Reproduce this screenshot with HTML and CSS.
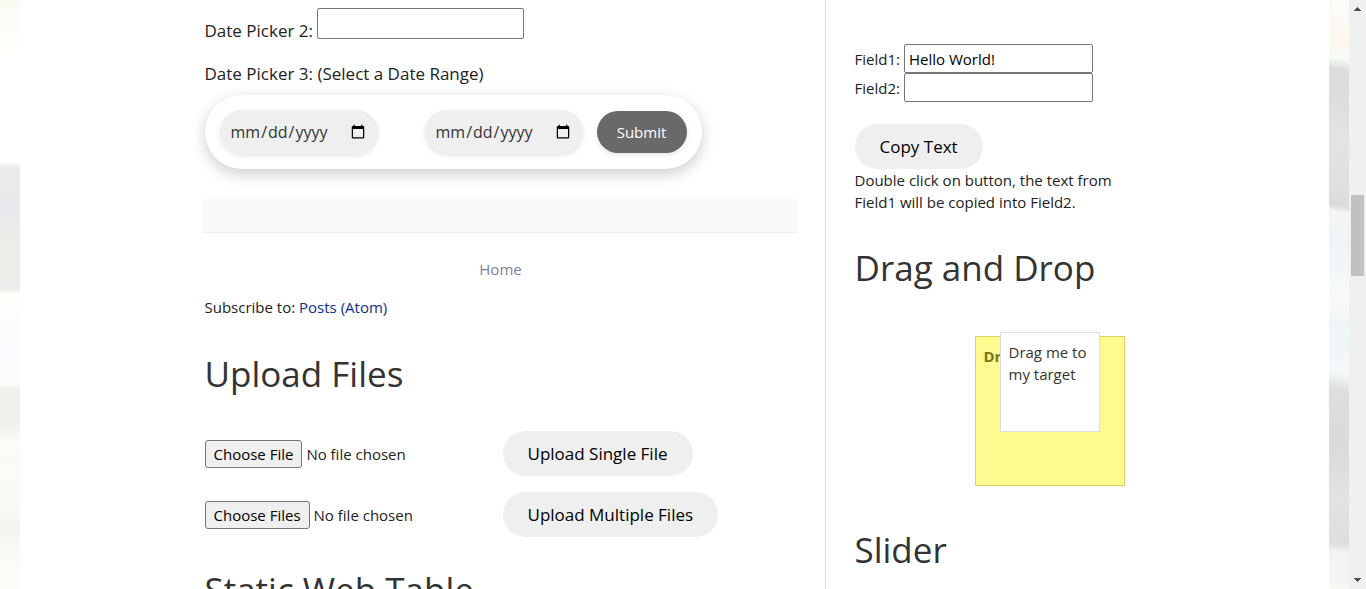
FILE: index.html
```html
<!DOCTYPE html>
<html lang="en">
<head>
<meta charset="utf-8">
<meta name="viewport" content="width=device-width, initial-scale=1">
<title>Automation Testing Practice</title>
<link rel="stylesheet" href="styles.css">
</head>
<body>
<div class="window">
  <div class="backdrop-left"></div>
  <div class="sheet">
    <div class="columns">
      <main class="main">
        <div class="picker">
          <label class="picker-label" for="picker2">Date Picker 2:</label>
          <input class="picker-input" id="picker2" type="text">
        </div>
        <p class="picker-title" id="range-title">Date Picker 3: (Select a Date Range)</p>
        <form class="range" aria-labelledby="range-title">
          <div class="range-dates">
            <input class="range-date" type="date" aria-label="Start date">
            <input class="range-date" type="date" aria-label="End date">
          </div>
          <button class="range-submit" type="button">Submit</button>
        </form>
        <div class="post-footer"></div>
        <nav class="pager"><a class="home-link" href="#home">Home</a></nav>
        <p class="feed">Subscribe to: <a class="feed-link" href="#atom">Posts (Atom)</a></p>
        <h2 class="title">Upload Files</h2>
        <form class="uploads">
          <input class="file" type="file" aria-label="Single file">
          <button class="pill" type="button">Upload Single File</button>
          <input class="file" type="file" multiple aria-label="Multiple files">
          <button class="pill" type="button">Upload Multiple Files</button>
        </form>
        <h2 class="title">Static Web Table</h2>
      </main>
      <aside class="side">
        <div class="field">
          <label for="field1">Field1:</label>
          <input class="field-input" id="field1" type="text" value="Hello World!">
        </div>
        <div class="field">
          <label for="field2">Field2:</label>
          <input class="field-input" id="field2" type="text">
        </div>
        <button class="pill copy" type="button">Copy Text</button>
        <p class="note">Double click on button, the text from Field1 will be copied into Field2.</p>
        <h2 class="title">Drag and Drop</h2>
        <div class="drop">
          <p class="drop-label">Drop here</p>
          <div class="drag">Drag me to my target</div>
        </div>
        <h2 class="title">Slider</h2>
      </aside>
    </div>
  </div>
  <div class="backdrop-right"></div>
  <div class="scrollbar">
    <svg class="arrow" viewBox="0 0 17 17" aria-hidden="true"><path d="M8 7h1v1h1v1h1v1h1v1H5v-1h1V9h1V8h1z"/></svg>
    <div class="thumb"></div>
    <svg class="arrow" viewBox="0 0 17 17" aria-hidden="true"><path d="M5 6h7v1h-1v1h-1v1H9v1H8V9H7V8H6V7H5z"/></svg>
  </div>
</div>
</body>
</html>
```
FILE: styles.css
```css
* { box-sizing: border-box; }
body {
  margin: 0;
  background: #fff;
  color: #222;
  font: 15px/22px "Segoe UI", "Open Sans", sans-serif;
}
p, h2 { margin: 0; }
input, button { font: inherit; }
a { text-decoration: none; }

.window {
  display: grid;
  grid-template-columns: 20px minmax(0, 1fr) 20px 17px;
  grid-template-rows: minmax(0, 1fr);
  height: 100vh;
  overflow: hidden;
}
.backdrop-left {
  background: linear-gradient(#f8faf0 0, #fdfdf7 3%, #fffffd 10%, #fff 27%, #fdfefa 27.5%, #e9eaea 28.5%, #e9e9ed 36%, #ebeee7 42%, #ececea 49%, #fefefa 50%, #fbfbff 60%, #fdfdfb 65%, #f0f1ec 66%, #eff1ec 72%, #f9fcf8 75%, #fcfaf4 81%, #f7faf5 86%, #f1f4ef 90%, #fafaf6 94%, #fdfcf7 100%);
}
.backdrop-right {
  background: linear-gradient(190deg, #fbfcfa 0, #fdf7ee 7%, #f8faf6 10%, #e8f1e5 11%, #dbdcdb 12%, #dcdddd 17%, #e2e3e3 23%, #e0e1df 32%, #dadbd9 35%, #f2f5f1 36%, #eff4f8 42%, #f8faf9 50%, #f7f8f4 52%, #eef5f6 55%, #f3f9fa 63%, #e8f0e9 64.5%, #dedede 66%, #dadada 76%, #e3e3e3 84%, #dedede 92%, #f2f3f5 93.5%, #f3f4f3 98%, #fafbf5 100%);
}
.sheet { padding: 0 20px; }
.columns {
  display: grid;
  grid-template-columns: minmax(0, 1fr) 320px;
  max-width: 940px;
  min-height: 100%;
  margin: 0 auto;
}
.main { padding: 8px 28px 0 0; }
.side {
  padding: 44px 0 0 29px;
  border-left: 1px solid #ddd;
}
.title {
  color: #333;
  font: 35px/50px "Open Sans", sans-serif;
}

.picker {
  display: flex;
  align-items: flex-end;
  gap: 4px;
  font-size: 17px;
}
.picker-label { line-height: 16px; }
.picker-input {
  width: 207px;
  height: 31px;
  border: 1px solid #767676;
  border-radius: 2px;
}
.picker-title {
  margin-top: 24px;
  font-size: 17px;
}
.range {
  display: flex;
  align-items: center;
  gap: 14px;
  width: fit-content;
  margin-top: 10px;
  padding: 15px;
  border-radius: 50px;
  background: #fff;
  box-shadow: 0 5px 15px rgba(0, 0, 0, .2);
}
.range-dates { display: flex; gap: 47px; }
.range-date {
  width: 158px;
  height: 44px;
  padding: 10px;
  border: 0;
  border-radius: 25px;
  background: #efefef;
  color: #333;
  font-size: 16px;
  box-shadow: 0 2px 5px rgba(0, 0, 0, .1);
}
.range-submit {
  width: 90px;
  height: 42px;
  border: 0;
  border-radius: 25px;
  background: #696969;
  color: #fff;
  box-shadow: 0 2px 5px rgba(0, 0, 0, .1);
}
.post-footer {
  height: 34px;
  margin: 30px 0 0 -2px;
  border-bottom: 1px solid #eee;
  background: #f9f9f9;
}
.pager { margin-top: 25px; text-align: center; }
.home-link { color: #7e7ea0; }
.feed { margin-top: 16px; }
.feed-link { color: #0a2e8c; }
.feed + .title { margin-top: 31px; }

.uploads {
  display: grid;
  grid-template-columns: 298px auto;
  justify-content: start;
  justify-items: start;
  align-items: center;
  gap: 16px 0;
  margin: 32px 0 28px;
}
.file { width: 280px; }
.file::file-selector-button {
  height: 28px;
  margin-right: 4px;
  padding: 0 8px;
  border: 1px solid #767676;
  border-radius: 3px;
  background: #efefef;
  color: #000;
  font: inherit;
}
.pill {
  height: 45px;
  padding: 0 25px;
  border: 0;
  border-radius: 25px;
  background: #efefef;
  color: #000;
  font-size: 17px;
}

.field {
  display: flex;
  align-items: center;
  gap: 4px;
}
.field-input {
  width: 189px;
  height: 29px;
  padding: 0 4px;
  border: 1px solid #767676;
  border-radius: 2px;
  color: #000;
}
.copy { display: block; margin-top: 22px; }
.note { max-width: 270px; }
.note + .title { margin-top: 30px; }

.drop {
  position: relative;
  width: 150px;
  height: 150px;
  margin: 43px 0 39px 120px;
  padding: 8px;
  border: 1px solid #dad55e;
  background: #fffa90;
  color: #777620;
}
.drop-label { font-weight: 700; }
.drag {
  position: absolute;
  top: -5px;
  left: 24px;
  width: 100px;
  height: 100px;
  padding: 8px;
  border: 1px solid #ddd;
  background: #fff;
  color: #333;
}

.scrollbar {
  display: grid;
  grid-template-rows: 17px minmax(0, 1fr) 17px;
  background: #f0f0f0;
}
.arrow { width: 17px; height: 17px; fill: #505050; }
.thumb {
  width: 13px;
  height: 81px;
  margin: 178px 2px 0;
  background: #c1c1c1;
}
```
